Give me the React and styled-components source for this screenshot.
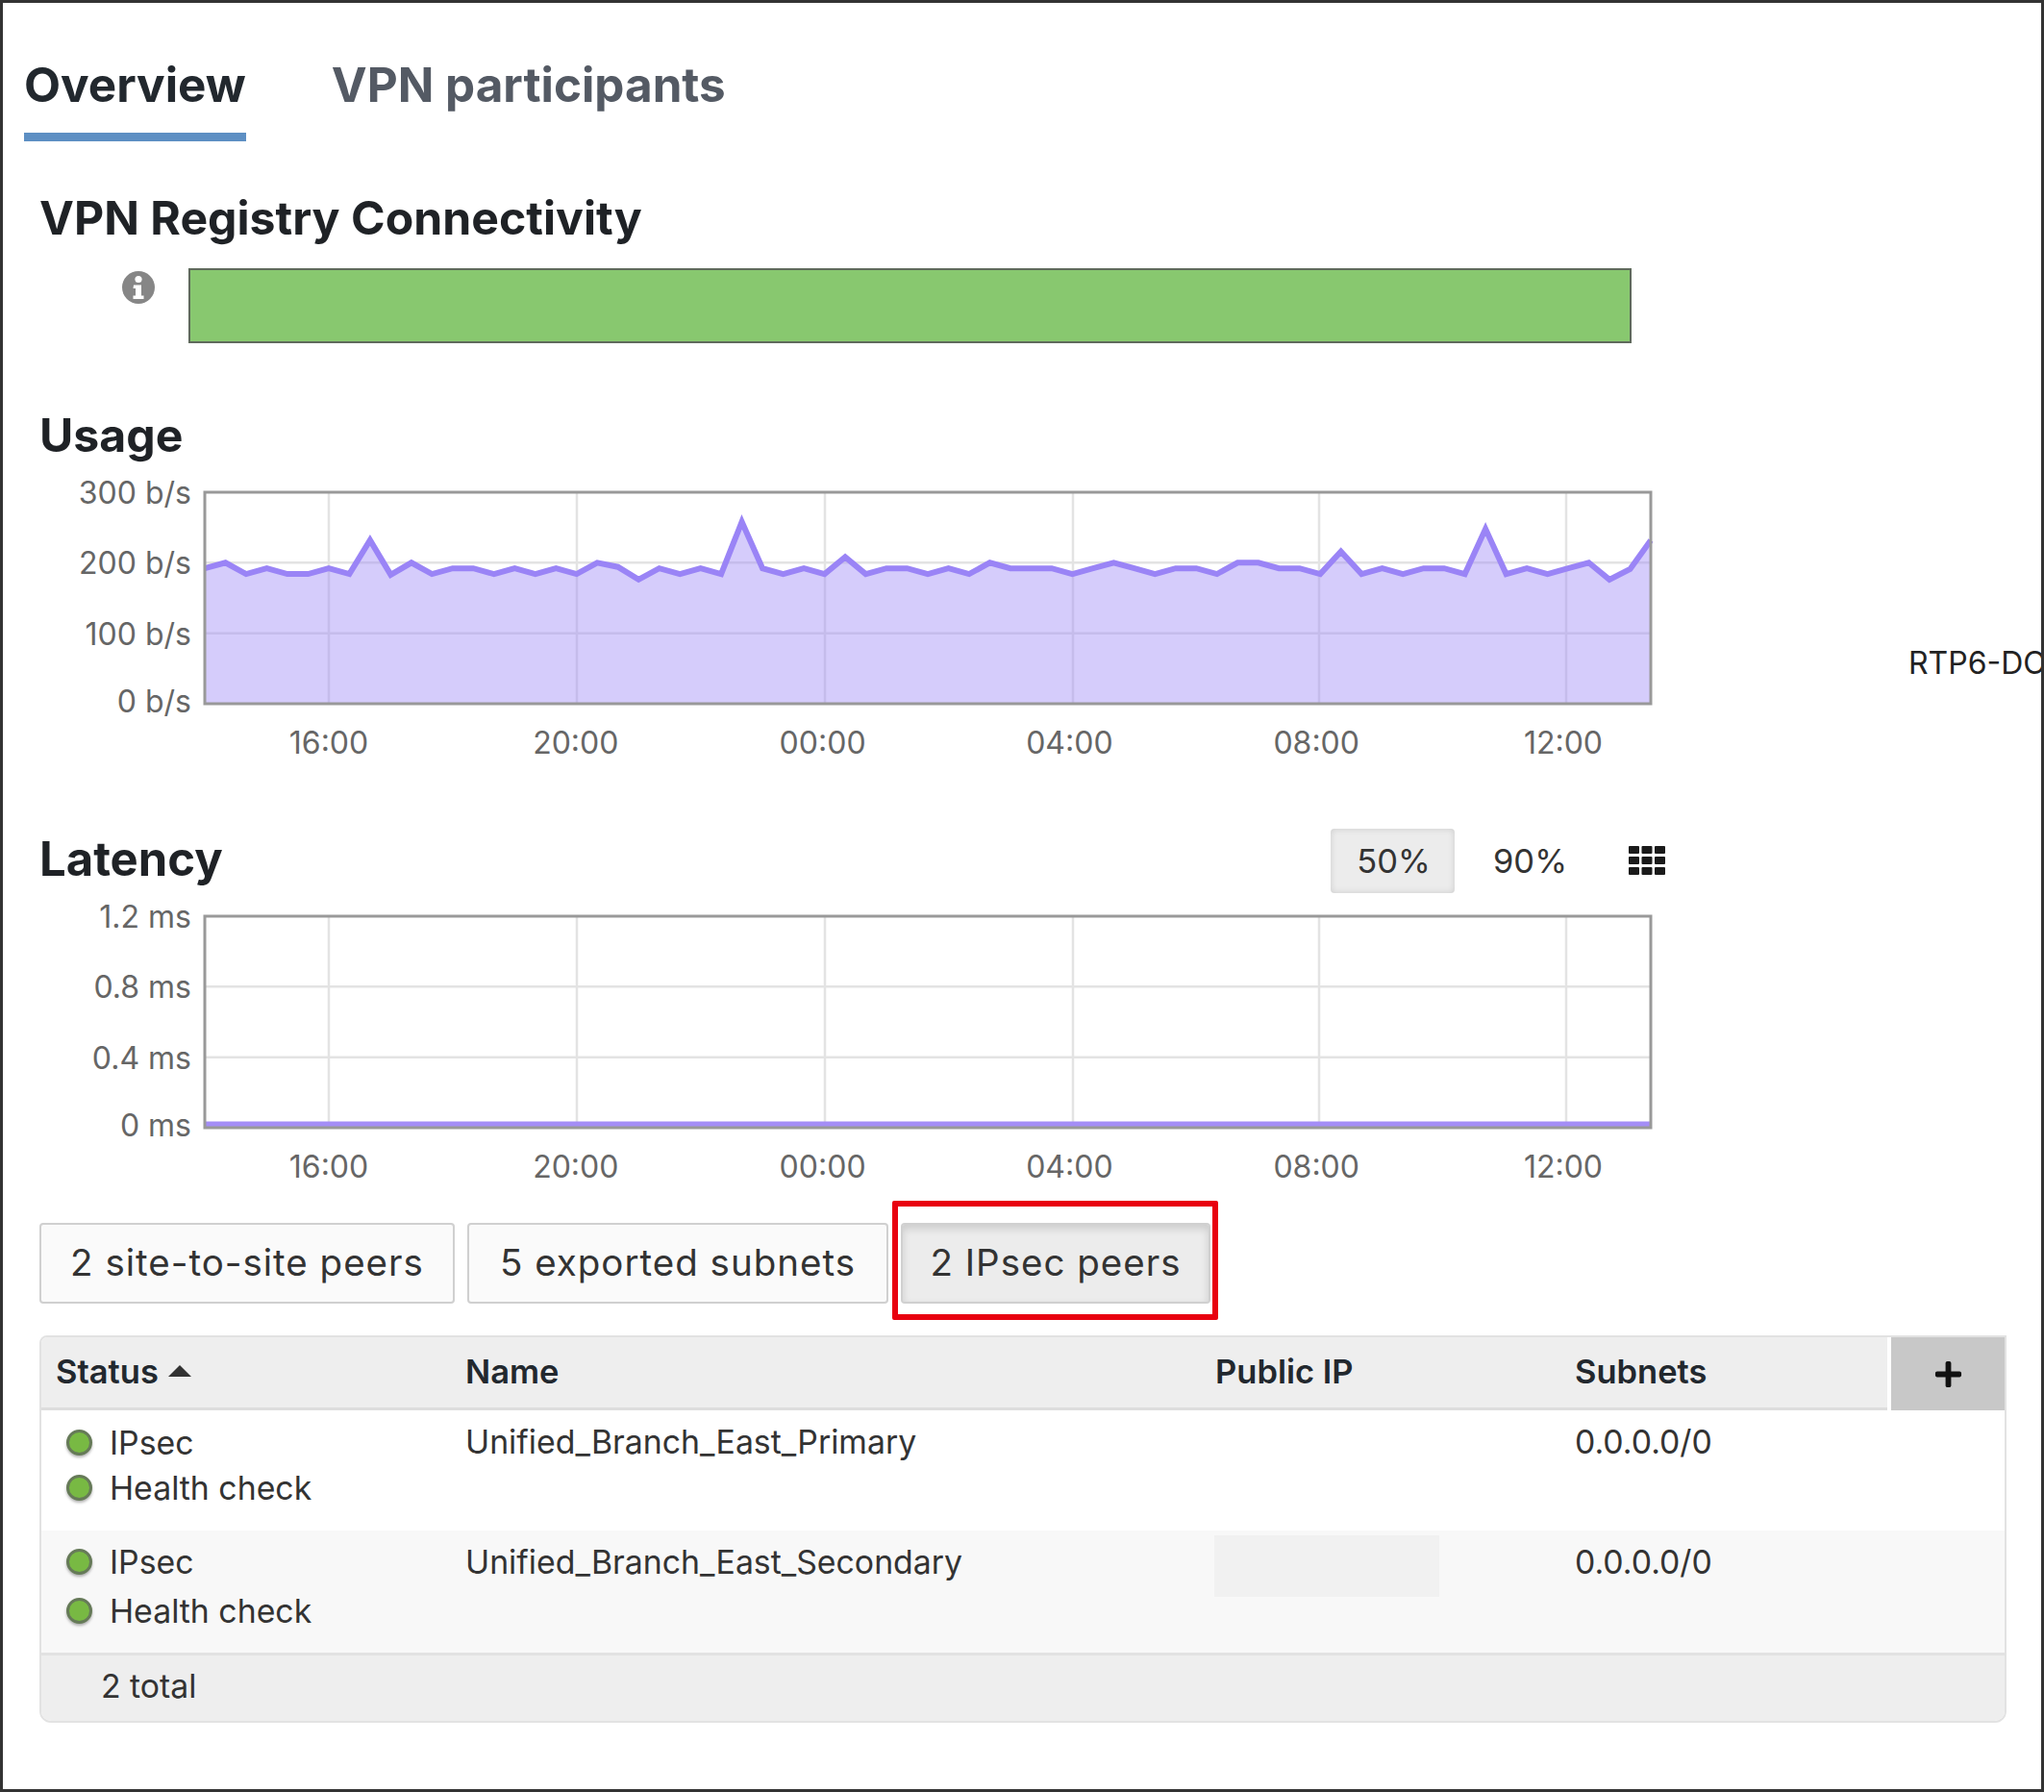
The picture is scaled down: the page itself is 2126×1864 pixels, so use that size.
import React from 'react';
import styled, { createGlobalStyle } from 'styled-components';
import { FaPlus } from 'react-icons/fa';

const GlobalStyle = createGlobalStyle`
  html, body {
    margin: 0;
    padding: 0;
    background: #fff;
  }
  * {
    box-sizing: border-box;
  }
`;

// b/s, one sample every 20 minutes or so
const usage = [
  192, 200, 184, 192, 184, 184, 192, 184, 232, 183, 200, 184, 192, 192, 184, 192, 184, 192, 184,
  200, 194, 176, 192, 184, 192, 184, 258, 192, 184, 192, 184, 208, 184, 192, 192, 184, 192, 184,
  200, 192, 192, 192, 184, 192, 200, 192, 184, 192, 192, 184, 200, 200, 192, 192, 184, 216, 184,
  192, 184, 192, 192, 184, 248, 184, 192, 184, 192, 200, 176, 191, 232,
];

const hours = ['16:00', '20:00', '00:00', '04:00', '08:00', '12:00'];
const hourLines = [300, 558, 816, 1074, 1330, 1587];

const PLOT = { left: 171, right: 1675, top: 22, bottom: 242 };

const peers = [
  { name: 'Unified_Branch_East_Primary', subnets: '0.0.0.0/0', tight: true },
  { name: 'Unified_Branch_East_Secondary', subnets: '0.0.0.0/0', masked: true },
];

const Chart = ({ ticks, data, max, flat }) => {
  const { left, right, top, bottom } = PLOT;
  const h = bottom - top;
  const step = (right - left) / (data.length - 1);
  const pts = data.map((v, i) => `${(left + i * step).toFixed(1)},${(bottom - (v / max) * h).toFixed(1)}`);
  return (
    <ChartBox>
      <ChartSvg width="1700" height="264" viewBox="0 0 1700 264">
        {hourLines.map((x) => (
          <line key={x} x1={x} x2={x} y1={top} y2={bottom} stroke="#e3e3e3" strokeWidth="2.5" />
        ))}
        {ticks.map((t, i) => {
          const y = top + (i * h) / (ticks.length - 1);
          return (
            <g key={t}>
              {i > 0 && i < ticks.length - 1 && (
                <line x1={left} x2={right} y1={y} y2={y} stroke="#e3e3e3" strokeWidth="2.5" />
              )}
              <text x="157" y={y + (i === ticks.length - 1 ? 9 : 12)} textAnchor="end">
                {t}
              </text>
            </g>
          );
        })}
        <polygon
          points={`${left},${bottom} ${pts.join(' ')} ${right},${bottom}`}
          fill="#9a86f6"
          fillOpacity="0.42"
        />
        <polyline
          points={pts.join(' ')}
          fill="none"
          stroke={flat ? '#a48df6' : '#9a84f6'}
          strokeWidth={flat ? 7 : 6}
          strokeLinejoin="miter"
        />
        <rect x={left} y={top} width={right - left} height={h} fill="none" stroke="#999" strokeWidth="3" />
      </ChartSvg>
      <TimeAxis>
        {hours.map((t) => (
          <TimeLabel key={t}>{t}</TimeLabel>
        ))}
      </TimeAxis>
    </ChartBox>
  );
};

const GridIcon = () => (
  <svg width="38" height="30" viewBox="0 0 38 30">
    {[0, 13.5, 27].map((x) =>
      [0, 11, 22].map((y) => <rect key={`${x}-${y}`} x={x} y={y} width="11" height="8" rx="1" fill="#1a1a1a" />)
    )}
  </svg>
);

const InfoGlyph = () => (
  <InfoSvg viewBox="0 0 34 34">
    <circle cx="17" cy="17" r="17" fill="#868686" />
    <circle cx="17" cy="8.5" r="3.6" fill="#fff" />
    <path d="M12 14.5h8v11h2.5v3.5h-11v-3.5h2.5v-7.5h-2.5z" fill="#fff" />
  </InfoSvg>
);

const StatusLine = ({ label }) => (
  <StatusItem>
    <Dot />
    {label}
  </StatusItem>
);

const App = () => {
  return (
    <Frame>
      <GlobalStyle />
      <Tabs>
        <Tab $active>Overview</Tab>
        <Tab>VPN participants</Tab>
      </Tabs>
      <Content>
        <RegistryTitle>VPN Registry Connectivity</RegistryTitle>
        <RegistryRow>
          <InfoGlyph />
          <RegistryBar />
        </RegistryRow>

        <UsageTitle>Usage</UsageTitle>
        <UsageRow>
          <Chart ticks={['300 b/s', '200 b/s', '100 b/s', '0 b/s']} data={usage} max={300} />
          <SideLabel>RTP6-DC</SideLabel>
        </UsageRow>

        <LatencyHeader>
          <LatencyTitle>Latency</LatencyTitle>
          <Toggles>
            <Toggle $active>50%</Toggle>
            <Toggle>90%</Toggle>
            <GridButton>
              <GridIcon />
            </GridButton>
          </Toggles>
        </LatencyHeader>
        <Chart
          ticks={['1.2 ms', '0.8 ms', '0.4 ms', '0 ms']}
          data={[0.016, 0.016, 0.016, 0.016]}
          max={1.2}
          flat
        />

        <PeerTabs>
          <PeerTab $width={432}>2 site-to-site peers</PeerTab>
          <PeerTab $width={438}>5 exported subnets</PeerTab>
          <PeerTab $width={322} $active>
            2 IPsec peers
            <Callout />
          </PeerTab>
        </PeerTabs>

        <Table>
          <HeadRow>
            <HeadCell $first>
              Status <SortCaret />
            </HeadCell>
            <HeadCell>Name</HeadCell>
            <HeadCell>Public IP</HeadCell>
            <HeadCell>Subnets</HeadCell>
            <AddCell>
              <FaPlus />
            </AddCell>
          </HeadRow>
          {peers.map((p, i) => (
            <BodyRow key={p.name} $odd={i % 2 === 1}>
              <StatusCell $tight={p.tight}>
                <StatusLine label="IPsec" />
                <StatusLine label="Health check" />
              </StatusCell>
              <Cell>{p.name}</Cell>
              <IpCell>{p.masked && <Masked />}</IpCell>
              <Cell>{p.subnets}</Cell>
            </BodyRow>
          ))}
          <TableFooter>2 total</TableFooter>
        </Table>
      </Content>
    </Frame>
  );
};

const Frame = styled.div`
  width: 2126px;
  height: 1864px;
  border: 3px solid #333;
  overflow: hidden;
  background: #fff;
  font-family: 'Inter', 'Liberation Sans', sans-serif;
  color: #333;
`;

const Tabs = styled.div`
  display: flex;
  gap: 89px;
  padding: 59px 0 0 22px;
`;

const Tab = styled.div`
  font-size: 49.4px;
  line-height: 52px;
  font-weight: 700;
  height: 85px;
  white-space: nowrap;
  color: ${(p) => (p.$active ? '#22282e' : '#545a64')};
  border-bottom: 9px solid ${(p) => (p.$active ? '#5d8fc3' : 'transparent')};
`;

const Content = styled.div`
  padding-left: 38px;
`;

const Title = styled.h2`
  margin: 0;
  font-size: 48.2px;
  line-height: 50px;
  font-weight: 700;
  color: #1f2226;
`;

const RegistryTitle = styled(Title)`
  margin-top: 55px;
`;

const UsageTitle = styled(Title)`
  margin-top: 71px;
`;

const LatencyTitle = styled(Title)`
  margin-bottom: 3px;
  font-size: 49px;
`;

const RegistryRow = styled.div`
  display: flex;
  align-items: flex-start;
  gap: 35px;
  margin-top: 27px;
  padding-left: 86px;
`;

const InfoSvg = styled.svg`
  flex: none;
  width: 34px;
  height: 34px;
  margin-top: 3px;
`;

const RegistryBar = styled.div`
  width: 1501px;
  height: 78px;
  background: #88c86f;
  border: 2px solid #5f6a5c;
`;

const UsageRow = styled.div`
  display: flex;
  align-items: flex-start;
  margin-top: 12px;
`;

const ChartBox = styled.div`
  flex: none;
  width: 1701px;
  margin-left: 1px;
`;

const ChartSvg = styled.svg`
  display: block;
  font-family: 'Inter', 'Liberation Sans', sans-serif;
  font-size: 32px;
  fill: #666;
`;

const TimeAxis = styled.div`
  display: grid;
  grid-template-columns: repeat(6, 256.8px);
  height: 36px;
  padding: 1px 0 0 171.6px;
`;

const TimeLabel = styled.div`
  font-size: 32px;
  line-height: 36px;
  text-align: center;
  color: #666;
`;

const SideLabel = styled.div`
  margin: 182px 0 0 242px;
  font-size: 32px;
  line-height: 36px;
  color: #222;
  white-space: nowrap;
`;

const LatencyHeader = styled.div`
  display: flex;
  align-items: center;
  justify-content: space-between;
  width: 1691px;
  height: 67px;
  margin-top: 72px;
  margin-bottom: 2px;
`;

const Toggles = styled.div`
  display: flex;
  align-items: center;
  gap: 13px;
`;

const Toggle = styled.div`
  width: 129px;
  height: 67px;
  padding-left: 2px;
  display: flex;
  align-items: center;
  justify-content: center;
  font-size: 34.5px;
  color: #333;
  border-radius: 4px;
  background: ${(p) => (p.$active ? '#ececec' : 'transparent')};
  box-shadow: ${(p) => (p.$active ? 'inset 0 0 7px rgba(0, 0, 0, 0.14)' : 'none')};
`;

const GridButton = styled.div`
  display: flex;
  margin: -2px 0 0 26px;
`;

const PeerTabs = styled.div`
  display: flex;
  gap: 13px;
  margin-top: 41px;
`;

const PeerTab = styled.div`
  position: relative;
  width: ${(p) => p.$width}px;
  height: 84px;
  padding-bottom: 2px;
  display: flex;
  align-items: center;
  justify-content: center;
  font-size: 38.5px;
  letter-spacing: 1px;
  color: #333;
  white-space: nowrap;
  border-radius: 4px;
  border: 2px solid #d0d0d0;
  background: ${(p) => (p.$active ? '#ececec' : '#fafafa')};
  box-shadow: ${(p) => (p.$active ? 'inset 0 4px 8px rgba(0, 0, 0, 0.14)' : 'none')};
`;

const Callout = styled.span`
  position: absolute;
  top: -25px;
  left: -11px;
  right: -10px;
  bottom: -19px;
  border: 6px solid #e8000f;
  border-radius: 2px;
`;

const Table = styled.div`
  margin-top: 33px;
  width: 2046px;
  height: 403px;
  border: 2px solid #e2e2e2;
  border-radius: 8px 0 12px 12px;
  overflow: hidden;
  font-size: 33.8px;
`;

const HeadRow = styled.div`
  display: grid;
  grid-template-columns: 441px 780px 374px 325px 1fr;
  height: 76px;
`;

const HeadCell = styled.div`
  display: flex;
  align-items: center;
  gap: 10px;
  padding: 0 0 3px ${(p) => (p.$first ? '15px' : '0')};
  font-size: 34.5px;
  font-weight: 600;
  color: #22282e;
  background: #eee;
  border-bottom: 3px solid #ddd;
`;

const SortCaret = styled.span`
  width: 0;
  height: 0;
  border-left: 12px solid transparent;
  border-right: 12px solid transparent;
  border-bottom: 12px solid #333;
`;

const AddCell = styled.div`
  display: flex;
  align-items: center;
  justify-content: center;
  margin-left: 4px;
  background: #c8c8c8;
  color: #111;
  font-size: 31px;
`;

const BodyRow = styled.div`
  display: grid;
  grid-template-columns: 441px 780px 374px 1fr;
  height: ${(p) => (p.$odd ? '127px' : '125px')};
  background: ${(p) => (p.$odd ? '#f8f8f8' : '#fff')};
`;

const StatusCell = styled.div`
  display: flex;
  flex-direction: column;
  gap: ${(p) => (p.$tight ? '9px' : '13px')};
  padding: ${(p) => (p.$tight ? '14px' : '13px')} 0 0 26px;
`;

const StatusItem = styled.div`
  display: flex;
  align-items: center;
  gap: 18px;
  height: 38px;
  color: #333;
`;

const Dot = styled.span`
  width: 27px;
  height: 27px;
  border-radius: 50%;
  background: #78b943;
  border: 3px solid #667a58;
  box-shadow: 0 2px 3px rgba(0, 0, 0, 0.3);
`;

const Cell = styled.div`
  padding-top: 14px;
  line-height: 38px;
  color: #333;
`;

const IpCell = styled.div`
  padding-top: 5px;
  margin-left: -1px;
`;

const Masked = styled.div`
  width: 234px;
  height: 64px;
  background: #f1f1f1;
`;

const TableFooter = styled.div`
  height: 73px;
  display: flex;
  align-items: center;
  padding: 0 0 7px 62px;
  background: #eee;
  border-top: 3px solid #e2e2e2;
  color: #333;
`;

export default App;
